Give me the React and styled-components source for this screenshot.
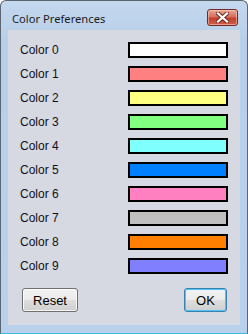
import React from "react";
import styled, { createGlobalStyle } from "styled-components";

const colors = [
  "#ffffff",
  "#ff8080",
  "#ffff80",
  "#80ff80",
  "#80ffff",
  "#0080ff",
  "#ff80c0",
  "#c0c0c0",
  "#ff8000",
  "#8080ff",
];

export default function App() {
  return (
    <>
      <Global />
      <Frame>
        <TitleBar>
          <Title>Color Preferences</Title>
          <CloseBtn>
            <svg width="13" height="11" viewBox="0 0 13 11">
              <path
                d="M2 1.5 L11 9.5 M11 1.5 L2 9.5"
                stroke="#6a2a24"
                strokeWidth="4"
                strokeLinecap="square"
              />
              <path
                d="M2 1.5 L11 9.5 M11 1.5 L2 9.5"
                stroke="#ffffff"
                strokeWidth="2.2"
                strokeLinecap="square"
              />
            </svg>
          </CloseBtn>
        </TitleBar>
        <Panel>
          <List>
            {colors.map((c, i) => (
              <Row key={i}>
                <Label>{`Color ${i}`}</Label>
                <Swatch $color={c} />
              </Row>
            ))}
          </List>
          <Footer>
            <Button>Reset</Button>
            <Button $default>OK</Button>
          </Footer>
        </Panel>
      </Frame>
    </>
  );
}

const Global = createGlobalStyle`
  html, body {
    margin: 0;
    padding: 0;
    background: #ffffff;
  }
`;

const Frame = styled.div`
  width: 248px;
  height: 334px;
  box-sizing: border-box;
  border: 1px solid #5c6670;
  border-bottom: 1px solid #3fb8dc;
  border-radius: 6px 6px 0 0;
  background: linear-gradient(#c4d8ee, #b7cfe9 40px, #b9d1ea);
  display: flex;
  flex-direction: column;
  overflow: hidden;
`;

const TitleBar = styled.div`
  height: 29px;
  display: flex;
  align-items: flex-start;
  justify-content: space-between;
  padding: 0 9px 0 11px;
`;

const Title = styled.div`
  font-family: "Noto Sans", "DejaVu Sans", sans-serif;
  font-size: 11.2px;
  color: #1c1c1c;
  margin-top: 10px;
  line-height: 16px;
`;

const CloseBtn = styled.div`
  margin-top: 8px;
  width: 31px;
  height: 17px;
  box-sizing: border-box;
  border: 1px solid #6e2c28;
  border-radius: 3px;
  background: linear-gradient(#e9a593, #d76f5c 45%, #c4402c 55%, #d0604a);
  box-shadow: inset 0 0 0 1px rgba(255, 220, 210, 0.5);
  display: flex;
  align-items: center;
  justify-content: center;
`;

const Panel = styled.div`
  margin: 0 7px;
  height: 295px;
  background: #d6d9e1;
  padding: 12px 12px 0 12px;
  box-sizing: border-box;
  display: flex;
  flex-direction: column;
`;

const List = styled.div`
  display: flex;
  flex-direction: column;
  gap: 8px;
`;

const Row = styled.div`
  display: grid;
  grid-template-columns: 108px 100px;
  align-items: center;
  height: 16px;
`;

const Label = styled.div`
  font-family: "Liberation Sans", Arial, sans-serif;
  font-size: 12px;
  color: #10101c;
  line-height: 16px;
`;

const Swatch = styled.div`
  width: 100px;
  height: 16px;
  box-sizing: border-box;
  border: 2px solid #000000;
  background: ${(p) => p.$color};
`;

const Footer = styled.div`
  margin-top: 14px;
  display: flex;
  justify-content: space-between;
  padding: 0 1px 0 2px;
`;

const Button = styled.button`
  width: ${(p) => (p.$default ? "43px" : "56px")};
  height: 24px;
  box-sizing: border-box;
  border: 1px solid ${(p) => (p.$default ? "#3c7fb1" : "#707070")};
  border-radius: 3px;
  background: linear-gradient(#f2f2f2, #ebebeb 48%, #dddddd 52%, #cfcfcf);
  box-shadow: inset 0 0 0 1px
    ${(p) => (p.$default ? "#48c6f4" : "rgba(255,255,255,0.8)")};
  font-family: "Liberation Sans", Arial, sans-serif;
  font-size: 13px;
  color: #000000;
  padding: 0;
`;
